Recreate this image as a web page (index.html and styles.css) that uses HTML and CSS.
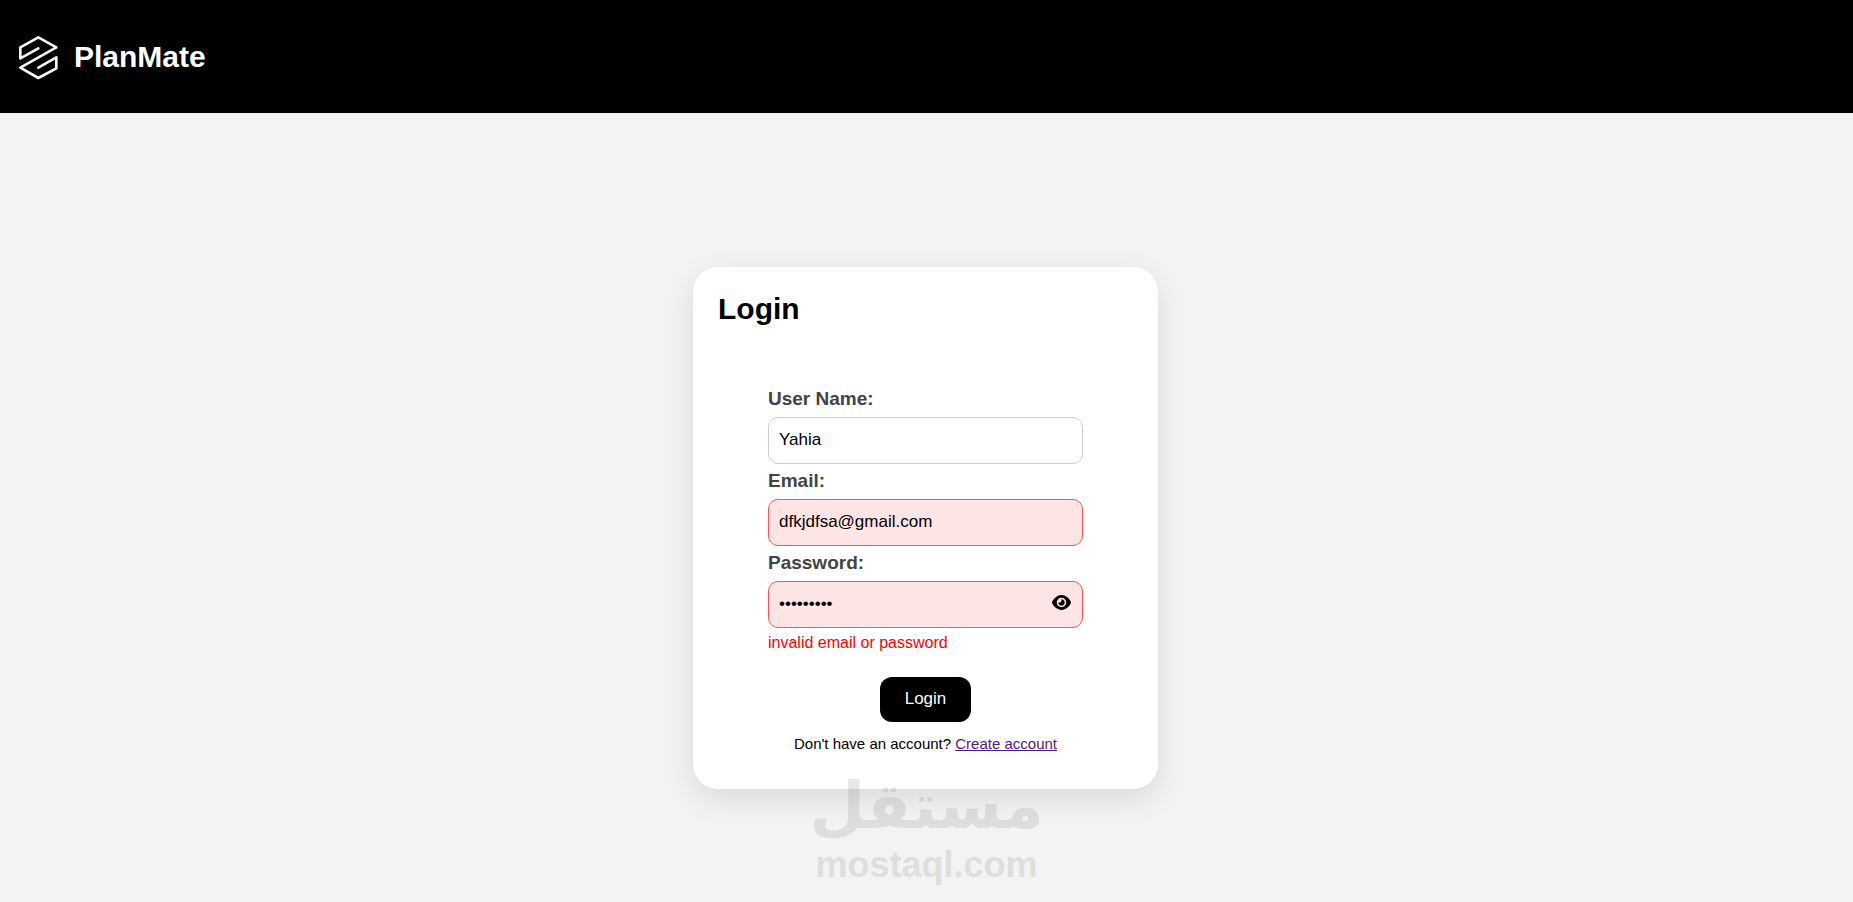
FILE: index.html
```html
<!DOCTYPE html>
<html lang="en">
<head>
  <meta charset="UTF-8" />
  <meta name="viewport" content="width=device-width, initial-scale=1.0" />
  <title>PlanMate - Login</title>
  <link rel="stylesheet" href="styles.css">
</head>
<body>
  <header class="header">
    <svg class="logo" viewBox="24 18 123 138" aria-hidden="true">
      <path d="M85 61 L31 91 V58 L85 28 L139 58 L31 119 L85 150 L139 121 V88 L85 119" />
    </svg>
    <span class="brand">PlanMate</span>
  </header>

  <main class="main">
    <div class="card">
      <h1>Login</h1>
      <form id="loginForm" class="form">
        <div class="field">
          <label for="username">User Name:</label>
          <input type="text" id="username" name="username" value="Yahia">
        </div>

        <div class="field">
          <label for="email">Email:</label>
          <input type="email" id="email" name="email" class="invalid" value="dfkjdfsa@gmail.com">
        </div>

        <div class="field">
          <label for="password">Password:</label>
          <div class="password-box">
            <input type="password" id="password" name="password" class="invalid" value="password1">
            <button type="button" class="eye" aria-label="Show password" onclick="togglePassword()">
              <svg viewBox="0 0 576 512" aria-hidden="true">
                <path d="M288 32c-80.8 0-145.5 36.8-192.6 80.6C48.6 156 17.3 208 2.5 243.7c-3.3 7.9-3.3 16.7 0 24.6C17.3 304 48.6 356 95.4 399.4C142.5 443.2 207.2 480 288 480s145.5-36.8 192.6-80.6c46.8-43.5 78.1-95.4 93-131.1c3.3-7.9 3.3-16.7 0-24.6c-14.9-35.7-46.2-87.7-93-131.1C433.5 68.8 368.8 32 288 32zM144 256a144 144 0 1 1 288 0 144 144 0 1 1 -288 0zm144-64c0 35.3-28.7 64-64 64c-7.1 0-13.9-1.2-20.3-3.3c-5.5-1.8-11.9 1.6-11.7 7.4c.3 6.9 1.3 13.8 3.2 20.7c13.7 51.2 66.4 81.6 117.6 67.9s81.6-66.4 67.9-117.6c-11.1-41.5-47.8-69.4-88.6-71.1c-5.8-.2-9.2 6.1-7.4 11.7c2.1 6.4 3.3 13.2 3.3 20.3z" />
              </svg>
            </button>
          </div>
        </div>

        <p class="error">invalid email or password</p>
        <button type="submit" class="submit">Login</button>
        <p class="signup">Don't have an account? <a href="#">Create account</a></p>
      </form>
    </div>
  </main>

  <div class="watermark">
    <span class="watermark-ar" lang="ar" dir="rtl">مستقل</span>
    <span class="watermark-en">mostaql.com</span>
  </div>

  <script>
    function togglePassword() {
      const input = document.getElementById("password");
      input.type = input.type === "password" ? "text" : "password";
    }
  </script>
</body>
</html>
```

FILE: styles.css
```css
* {
  box-sizing: border-box;
}
body {
  font-family: Arial, "Liberation Sans", sans-serif;
  background: #f3f3f3;
  color: #000;
  margin: 0;
  min-height: 100vh;
  display: flex;
  flex-direction: column;
  position: relative;
}
h1, p {
  margin: 0;
}

/* Top bar */
.header {
  display: flex;
  align-items: center;
  gap: 15px;
  height: 113px;
  padding: 0 18px;
  background: #000;
}
.logo {
  width: 41px;
  height: 46px;
  fill: none;
  stroke: #f8f3f3;
  stroke-width: 8;
  stroke-linecap: round;
  stroke-linejoin: round;
}
.brand {
  color: #fff;
  font-size: 30px;
  font-weight: bold;
}

/* Login card */
.main {
  flex: 1;
  display: flex;
  justify-content: center;
  align-items: center;
  padding: 40px 2px 0 0;
}
.card {
  width: 100%;
  max-width: 465px;
  padding: 25px 25px 36px;
  background: #fff;
  border-radius: 25px;
  box-shadow: 0 10px 30px rgba(0, 0, 0, 0.1);
}
h1 {
  font-size: 30px;
  line-height: 34px;
}
.form {
  display: flex;
  flex-direction: column;
  gap: 6px;
  padding: 62px 50px 0;
}
.field {
  display: flex;
  flex-direction: column;
  gap: 7px;
}
label {
  font-size: 19px;
  line-height: 22px;
  font-weight: bold;
  color: #444;
}
input {
  width: 100%;
  height: 47px;
  padding: 10px;
  border: 1px solid #ccc;
  border-radius: 10px;
  background: #fff;
  color: #000;
  font-family: inherit;
  font-size: 17px;
  outline: none;
}
input.invalid {
  border-color: #ff5252;
  background: #fde5e6;
}
.password-box {
  position: relative;
}
.eye {
  position: absolute;
  top: 0;
  right: 12px;
  height: 44px;
  padding: 0;
  border: none;
  background: none;
  cursor: pointer;
}
.eye svg {
  display: block;
  width: 19px;
  height: 17px;
}
.error {
  font-size: 16px;
  line-height: 18px;
  color: #f00;
}
.submit {
  align-self: center;
  height: 45px;
  margin-top: 19px;
  padding: 0 25px;
  border: none;
  border-radius: 12px;
  background: #000;
  color: #fff;
  font-family: inherit;
  font-size: 17px;
  cursor: pointer;
}
.signup {
  margin-top: 7px;
  font-size: 15px;
  line-height: 18px;
  text-align: center;
}
.signup a {
  color: #551a8b;
}

/* Watermark over the bottom of the page */
.watermark {
  position: absolute;
  bottom: 16px;
  left: 0;
  right: 0;
  display: flex;
  flex-direction: column;
  align-items: center;
  color: #736b6e;
  font-weight: bold;
  opacity: 0.15;
  pointer-events: none;
}
.watermark-ar {
  font-family: "DejaVu Sans", sans-serif;
  font-size: 64px;
  line-height: 76px;
}
.watermark-en {
  font-size: 36px;
  line-height: 42px;
}
```
